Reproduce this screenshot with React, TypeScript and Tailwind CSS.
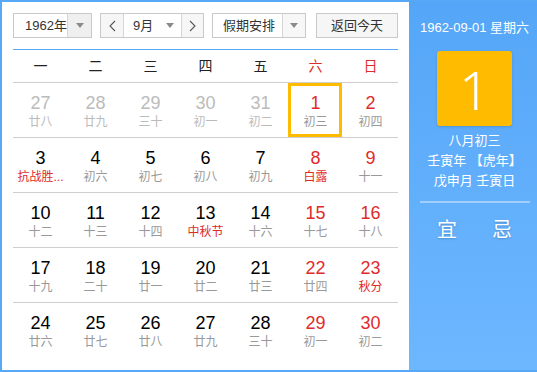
import React from "react";

type Cell = { d: number; l: string; other?: boolean; red?: boolean; lred?: boolean; sel?: boolean };

const rows: Cell[][] = [
  [
    { d: 27, l: "廿八", other: true },
    { d: 28, l: "廿九", other: true },
    { d: 29, l: "三十", other: true },
    { d: 30, l: "初一", other: true },
    { d: 31, l: "初二", other: true },
    { d: 1, l: "初三", red: true, sel: true },
    { d: 2, l: "初四", red: true },
  ],
  [
    { d: 3, l: "抗战胜...", lred: true },
    { d: 4, l: "初六" },
    { d: 5, l: "初七" },
    { d: 6, l: "初八" },
    { d: 7, l: "初九" },
    { d: 8, l: "白露", red: true, lred: true },
    { d: 9, l: "十一", red: true },
  ],
  [
    { d: 10, l: "十二" },
    { d: 11, l: "十三" },
    { d: 12, l: "十四" },
    { d: 13, l: "中秋节", lred: true },
    { d: 14, l: "十六" },
    { d: 15, l: "十七", red: true },
    { d: 16, l: "十八", red: true },
  ],
  [
    { d: 17, l: "十九" },
    { d: 18, l: "二十" },
    { d: 19, l: "廿一" },
    { d: 20, l: "廿二" },
    { d: 21, l: "廿三" },
    { d: 22, l: "廿四", red: true },
    { d: 23, l: "秋分", red: true, lred: true },
  ],
  [
    { d: 24, l: "廿六" },
    { d: 25, l: "廿七" },
    { d: 26, l: "廿八" },
    { d: 27, l: "廿九" },
    { d: 28, l: "三十" },
    { d: 29, l: "初一", red: true },
    { d: 30, l: "初二", red: true },
  ],
];

const weekdays = ["一", "二", "三", "四", "五", "六", "日"];

const Tri = () => (
  <svg width="8" height="5" viewBox="0 0 8 5">
    <path d="M0 0 L8 0 L4 5 Z" fill="#8a8a8a" />
  </svg>
);

const Chev = ({ dir }: { dir: "l" | "r" }) => (
  <svg width="7" height="12" viewBox="0 0 7 12">
    <path
      d={dir === "l" ? "M6 1 L1 6 L6 11" : "M1 1 L6 6 L1 11"}
      fill="none"
      stroke="#555"
      strokeWidth="1.1"
    />
  </svg>
);

export default function App() {
  return (
    <div
      className="w-[537px] h-[372px] flex border-2 border-r-0 border-[#58a8f8] bg-white text-[#000]"
      style={{ fontFamily: '"Liberation Sans", "Noto Sans CJK SC", sans-serif' }}
    >
      <div className="w-[407px] h-full bg-white pt-[11px] px-[11px]">
        {/* toolbar */}
        <div className="flex h-[25px] text-[13px] text-[#333]">
          <div className="flex w-[79px] h-[25px] border border-[#c9c9c9]">
            <div className="flex-1 flex items-center pl-[11px] bg-white">1962年</div>
            <div className="w-[24px] flex items-center justify-center bg-[#efefef] border-l border-[#d6d6d6]">
              <Tri />
            </div>
          </div>
          <div className="flex w-[104px] h-[25px] ml-[8px] border border-[#c9c9c9]">
            <div className="w-[23px] flex items-center justify-center bg-[#f6f6f6] border-r border-[#d6d6d6]">
              <Chev dir="l" />
            </div>
            <div className="flex-1 flex items-center justify-between pl-[9px] pr-[7px] bg-white">
              <span>9月</span>
              <Tri />
            </div>
            <div className="w-[22px] flex items-center justify-center bg-[#f6f6f6] border-l border-[#d6d6d6]">
              <Chev dir="r" />
            </div>
          </div>
          <div className="flex w-[94px] h-[25px] ml-[8px] border border-[#c9c9c9]">
            <div className="flex-1 flex items-center pl-[10px] bg-white">假期安排</div>
            <div className="w-[23px] flex items-center justify-center bg-[#f7f7f7] border-l border-[#d6d6d6]">
              <Tri />
            </div>
          </div>
          <div className="flex w-[82px] h-[25px] ml-[10px] items-center justify-center border border-[#c9c9c9] bg-[#f6f6f6]">
            返回今天
          </div>
        </div>
        <div className="h-px bg-[#5aa8f8] mt-[11px]" />
        {/* header */}
        <div className="grid grid-cols-7 h-[33px] border-b border-[#cfcfcf]">
          {weekdays.map((w, i) => (
            <div
              key={w}
              className={`flex items-center justify-center text-[14px] ${i >= 5 ? "text-[#e02b2b]" : "text-[#222]"}`}
            >
              {w}
            </div>
          ))}
        </div>
        {rows.map((r, ri) => (
          <div
            key={ri}
            className={`grid grid-cols-7 h-[55px] ${ri < rows.length - 1 ? "border-b border-[#cfcfcf]" : ""}`}
          >
            {r.map((c, ci) => (
              <div key={ci} className="relative flex flex-col items-center pt-[10px]">
                {c.sel && (
                  <div className="absolute left-0 top-0 w-[54px] h-[54px] border-[3px] border-[#ffbb00]" />
                )}
                <div
                  className={`text-[18px] leading-[20px] ${
                    c.other ? "text-[#bbbbbb]" : c.red ? "text-[#e02b2b]" : "text-[#000]"
                  }`}
                >
                  {c.d}
                </div>
                <div
                  className={`text-[12px] leading-[16px] mt-[1px] ${
                    c.lred ? "text-[#e02b2b]" : c.other ? "text-[#bbbbbb]" : "text-[#999999]"
                  }`}
                >
                  {c.l}
                </div>
              </div>
            ))}
          </div>
        ))}
      </div>
      <div className="flex-1 h-full bg-gradient-to-b from-[#55a6f8] to-[#6db7ff] flex flex-col items-center pl-[3px] pt-[16px] text-white">
        <div className="text-[13px] leading-[20px] whitespace-nowrap">1962-09-01 星期六</div>
        <div className="mt-[13px] w-[75px] h-[75px] rounded-[3px] bg-[#ffbb00] shadow-[0_1px_3px_rgba(0,0,0,0.15)] flex items-center justify-center">
          <span
            className="text-[54px] leading-none font-light text-white"
            style={{ fontFamily: '"Noto Sans", "Liberation Sans", sans-serif' }}
          >
            1
          </span>
        </div>
        <div className="mt-[5px] text-[13px] leading-[20px]">八月初三</div>
        <div className="text-[13px] leading-[20px] whitespace-nowrap">壬寅年 【虎年】</div>
        <div className="text-[13px] leading-[20px] whitespace-nowrap">戊申月 壬寅日</div>
        <div className="mt-[10px] w-[110px] h-[2px] bg-white/40" />
        <div className="mt-[13px] flex gap-[35px] text-[20px] leading-[28px] [text-shadow:0_1px_2px_rgba(0,0,0,0.2)]">
          <span>宜</span>
          <span>忌</span>
        </div>
      </div>
    </div>
  );
}
